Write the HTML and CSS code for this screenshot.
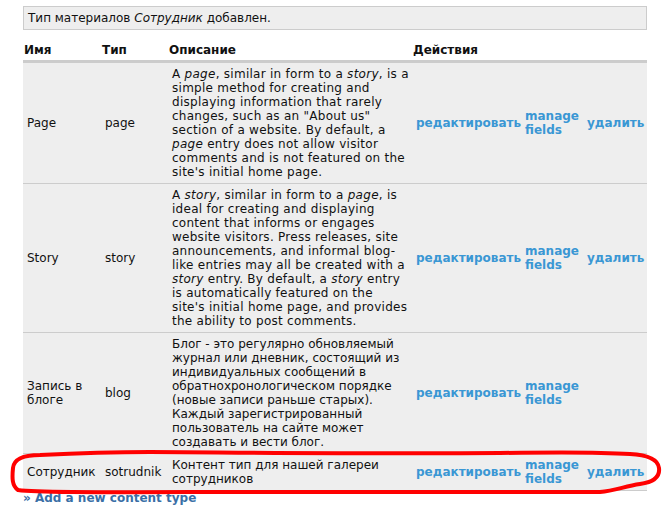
FILE: index.html
```html
<!DOCTYPE html>
<html lang="ru">
<head>
    <meta charset="UTF-8">
    <title>Типы материалов</title>
    <link rel="stylesheet" href="styles.css">
</head>
<body>
    <div class="messages">Тип материалов <em>Сотрудник</em> добавлен.</div>

    <table class="types">
        <colgroup>
            <col class="c-name"><col class="c-type"><col class="c-desc">
            <col class="c-edit"><col class="c-fields"><col class="c-del">
        </colgroup>
        <thead>
            <tr>
                <th>Имя</th>
                <th>Тип</th>
                <th>Описание</th>
                <th colspan="3">Действия</th>
            </tr>
        </thead>
        <tbody>
            <tr>
                <td>Page</td>
                <td>page</td>
                <td class="lat">A <em>page</em>, similar in form to a <em>story</em>, is a simple method for creating and displaying information that rarely changes, such as an "About us" section of a website. By default, a <em>page</em> entry does not allow visitor comments and is not featured on the site's initial home page.</td>
                <td><a href="#">редактировать</a></td>
                <td><a href="#">manage fields</a></td>
                <td><a href="#">удалить</a></td>
            </tr>
            <tr>
                <td>Story</td>
                <td>story</td>
                <td class="lat">A <em>story</em>, similar in form to a <em>page</em>, is ideal for creating and displaying content that informs or engages website visitors. Press releases, site announcements, and informal blog-like entries may all be created with a <em>story</em> entry. By default, a <em>story</em> entry is automatically featured on the site's initial home page, and provides the ability to post comments.</td>
                <td><a href="#">редактировать</a></td>
                <td><a href="#">manage fields</a></td>
                <td><a href="#">удалить</a></td>
            </tr>
            <tr>
                <td>Запись в блоге</td>
                <td>blog</td>
                <td>Блог - это регулярно обновляемый журнал или дневник, состоящий из индивидуальных сообщений в обратнохронологическом порядке (новые записи раньше старых). Каждый зарегистрированный пользователь на сайте может создавать и вести блог.</td>
                <td><a href="#">редактировать</a></td>
                <td><a href="#">manage fields</a></td>
                <td></td>
            </tr>
            <tr>
                <td>Сотрудник</td>
                <td>sotrudnik</td>
                <td>Контент тип для нашей галереи сотрудников</td>
                <td><a href="#">редактировать</a></td>
                <td><a href="#">manage fields</a></td>
                <td><a href="#">удалить</a></td>
            </tr>
        </tbody>
    </table>

    <a class="add-link" href="#">» Add a new content type</a>

    <!-- hand-drawn marker around the new row -->
    <svg class="marker" width="664" height="518" viewBox="0 0 664 518">
        <path d="M40 455 C 25 455, 14 458, 13 468 C 12 478, 12 486, 18 490 C 40 493, 120 492, 300 492 C 450 492, 560 492, 600 492 C 615 491, 625 486, 640 484 C 655 482, 660 476, 659 468 C 658 460, 650 455, 630 454 C 600 452, 560 452, 500 453 C 350 454, 200 452, 150 452 C 100 452, 60 454, 40 455 Z"/>
    </svg>
</body>
</html>
```

FILE: styles.css
```css
body {
    margin: 0;
    padding: 6px 17px 0 23px;
    font-family: "DejaVu Sans", Verdana, sans-serif;
    font-size: 12px;
    line-height: 14px;
    color: #111;
    background: #fff;
}
.messages {
    background-color: #eee;
    border: 1px solid #ccc;
    padding: 4px 4px;
    margin-bottom: 10px;
}
.types {
    width: 624px;
    border-collapse: collapse;
    table-layout: fixed;
}
.c-name { width: 78px; }
.c-type { width: 67px; }
.c-desc { width: 244px; }
.c-edit { width: 109px; }
.c-fields { width: 62px; }
.c-del { width: 64px; }
.types th {
    text-align: left;
    font-weight: bold;
    padding: 3px 1px 3px 1px;
    border-bottom: 3px solid #ccc;
}
.types td {
    background-color: #eee;
    border-bottom: 1px solid #ccc;
    padding: 4px 4px;
    vertical-align: middle;
}
.types td.lat {
    letter-spacing: 0.27px;
    padding-right: 3px;
}
.types a {
    color: #3a97d4;
    font-weight: bold;
    text-decoration: none;
}
.add-link {
    display: inline-block;
    margin-top: -1px;
    color: #3a6fa6;
    font-weight: bold;
    text-decoration: none;
}
.marker {
    position: absolute;
    left: 0;
    top: 0;
    pointer-events: none;
}
.marker path {
    fill: none;
    stroke: #f00;
    stroke-width: 4;
    stroke-linejoin: round;
    filter: blur(0.4px);
}
```
